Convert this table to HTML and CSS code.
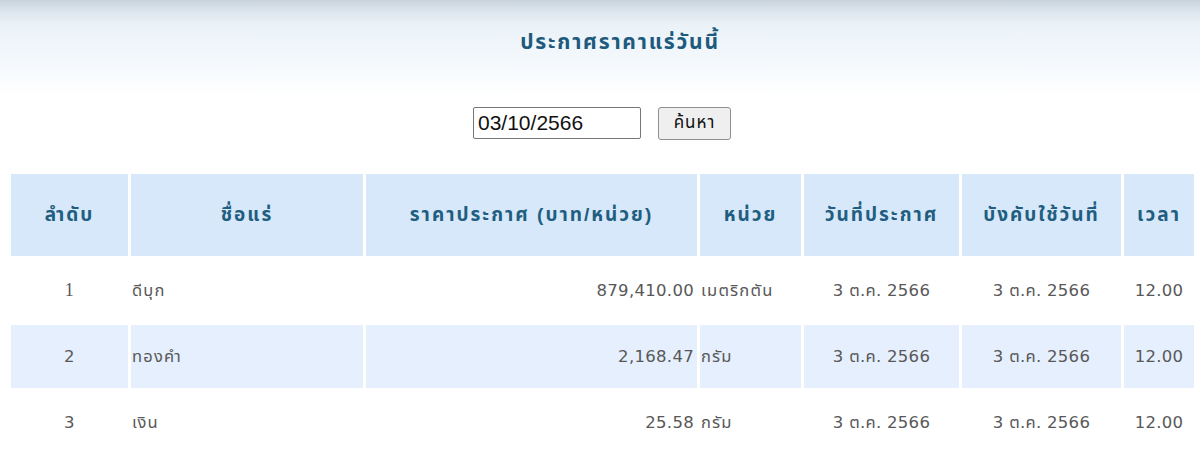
FILE: index.html
```html
<!DOCTYPE html>
<html lang="th">
<head>
<meta charset="utf-8">
<title>ประกาศราคาแร่วันนี้</title>
<link rel="stylesheet" href="styles.css">
</head>
<body>
<div class="page">
  <h1 class="title">ประกาศราคาแร่วันนี้</h1>
  <form class="search">
    <input class="date-input" type="text" value="03/10/2566">
    <button class="btn" type="button">ค้นหา</button>
  </form>
  <table class="prices">
    <colgroup>
      <col class="c1"><col class="c2"><col class="c3"><col class="c4"><col class="c5"><col class="c6"><col class="c7">
    </colgroup>
    <thead>
      <tr>
        <th>ลำดับ</th>
        <th>ชื่อแร่</th>
        <th>ราคาประกาศ (บาท/หน่วย)</th>
        <th>หน่วย</th>
        <th>วันที่ประกาศ</th>
        <th>บังคับใช้วันที่</th>
        <th>เวลา</th>
      </tr>
    </thead>
    <tbody>
      <tr>
        <td class="center num1">1</td>
        <td class="left thai">ดีบุก</td>
        <td class="right">879,410.00</td>
        <td class="left thai">เมตริกตัน</td>
        <td class="center">3 ต.ค. 2566</td>
        <td class="center">3 ต.ค. 2566</td>
        <td class="center">12.00</td>
      </tr>
      <tr class="alt">
        <td class="center">2</td>
        <td class="left thai">ทองคำ</td>
        <td class="right">2,168.47</td>
        <td class="left thai">กรัม</td>
        <td class="center">3 ต.ค. 2566</td>
        <td class="center">3 ต.ค. 2566</td>
        <td class="center">12.00</td>
      </tr>
      <tr>
        <td class="center">3</td>
        <td class="left thai">เงิน</td>
        <td class="right">25.58</td>
        <td class="left thai">กรัม</td>
        <td class="center">3 ต.ค. 2566</td>
        <td class="center">3 ต.ค. 2566</td>
        <td class="center">12.00</td>
      </tr>
    </tbody>
  </table>
</div>
</body>
</html>
```
FILE: styles.css
```css
html {
  background: #ffffff;
}
body {
  margin: 0;
  min-height: 453px;
  font-family: "Liberation Sans", "Noto Sans Thai", "Noto Sans", sans-serif;
  background: linear-gradient(to bottom, #c9d3dc 0px, #dde6ee 12px, #eaf2f8 24px, #f3f8fc 60px, #ffffff 95px) no-repeat;
  background-size: 100% 100px;
  background-color: #ffffff;
}
.page {
  padding: 0 8px;
}
.title {
  margin: 0;
  padding: 30px 0 0 40px;
  line-height: 24px;
  font-size: 21px;
  letter-spacing: 1.8px;
  font-weight: bold;
  color: #1d5a7d;
  text-align: center;
}
.search {
  margin: 53px 0 0;
  display: flex;
  justify-content: center;
  align-items: center;
  gap: 17px;
  height: 32px;
  padding-left: 4px;
}
.date-input {
  box-sizing: border-box;
  width: 168px;
  height: 32px;
  padding: 0 4px;
  border: 1px solid #767676;
  border-radius: 2px;
  font-family: "Liberation Sans", sans-serif;
  font-size: 21px;
  color: #111;
  background: #fff;
}
.btn {
  box-sizing: border-box;
  width: 73px;
  height: 33px;
  border: 1px solid #8f8f8f;
  border-radius: 3px;
  background: #efefef;
  font-family: "Liberation Sans", "Noto Sans Thai", sans-serif;
  font-size: 17px;
  letter-spacing: 1px;
  color: #111;
  padding: 0;
}
.prices {
  margin-top: 32px;
  table-layout: fixed;
  border-collapse: separate;
  border-spacing: 3px;
  width: 1189px;
}
.c1 { width: 117px; }
.c2 { width: 232px; }
.c3 { width: 331px; }
.c4 { width: 101px; }
.c5 { width: 155px; }
.c6 { width: 159px; }
.c7 { width: 70px; }
.prices th {
  height: 82px;
  padding: 0;
  background: #d7e8fb;
  color: #1f5e80;
  font-size: 19px;
  letter-spacing: 2px;
  font-weight: bold;
  text-align: center;
}
.prices td {
  height: 63px;
  padding: 0 3px;
  font-family: "DejaVu Sans", "Noto Sans Thai", sans-serif;
  font-size: 16.5px;
  letter-spacing: 0.3px;
  color: #585858;
  white-space: nowrap;
}
.prices tr.alt td {
  background: #e5effd;
}
.center { text-align: center; }
.left { text-align: left; }
.right { text-align: right; }
.prices td.left { padding-left: 1px; }
.prices td.thai { letter-spacing: 1.2px; }
.prices td.num1 { font-family: "Liberation Serif", serif; font-size: 18px; }
```
